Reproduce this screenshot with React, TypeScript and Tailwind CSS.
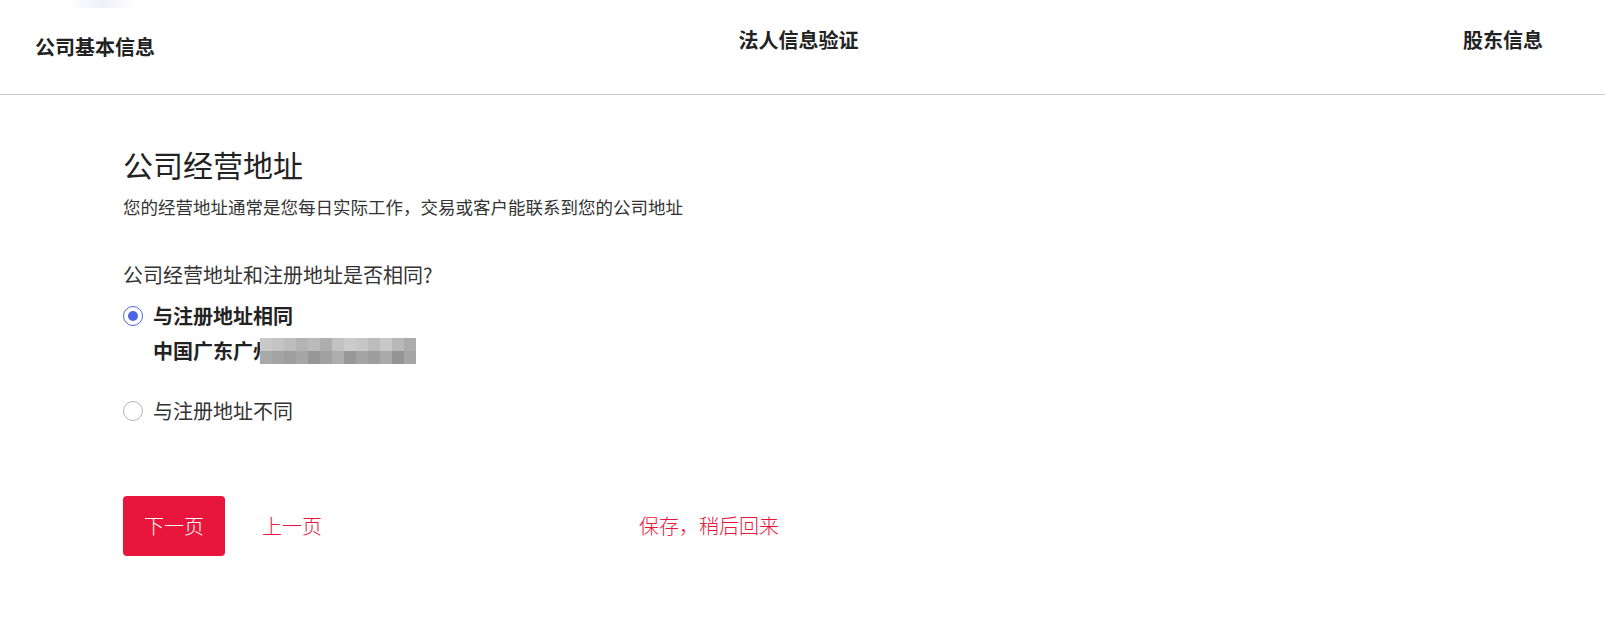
import { useState } from 'react';

const mosaicTop = ['#c9c9c9', '#c4c4c4', '#bdbdbd', '#b3b3b3', '#bababa', '#aeaeae', '#c2c2c2', '#cbcbcb', '#c6c6c6', '#bcbcbc', '#c8c8c8', '#b8b8b8', '#acacac'];
const mosaicBottom = ['#a9a9a9', '#a3a3a3', '#9f9f9f', '#a6a6a6', '#979797', '#a1a1a1', '#adadad', '#989898', '#a4a4a4', '#9d9d9d', '#aaaaaa', '#949494', '#a5a5a5'];

function Radio({ checked }: { checked: boolean }) {
  return (
    <span
      className={
        checked
          ? 'flex h-[20px] w-[20px] shrink-0 items-center justify-center rounded-full border border-[#4b66e6] bg-white'
          : 'flex h-[20px] w-[20px] shrink-0 items-center justify-center rounded-full border border-[#b4b4b4] bg-white'
      }
    >
      {checked && <span className="h-[10px] w-[10px] rounded-full bg-[#4b66e6]" />}
    </span>
  );
}

export default function App() {
  const [same, setSame] = useState(true);

  return (
    <div className="relative min-h-[619px] w-full bg-white font-['Noto_Sans_CJK_SC',sans-serif] text-[#222]">
      <div className="pointer-events-none absolute left-[68px] top-0 h-[8px] w-[68px] rounded-b-full bg-gradient-to-r from-transparent via-[#f0f0fa] to-transparent" />

      <header className="grid h-[95px] grid-cols-3 border-b border-[#cccccc]">
        <div className="pl-[35px] pt-[33px] text-[20px] font-bold leading-[28px]">公司基本信息</div>
        <div className="pr-[8px] pt-[26px] text-center text-[20px] font-bold leading-[28px]">法人信息验证</div>
        <div className="pr-[62px] pt-[26px] text-right text-[20px] font-bold leading-[28px]">股东信息</div>
      </header>

      <main className="pl-[123px] pt-[49px]">
        <h1 className="text-[30px] font-normal leading-[40px] text-[#222]">公司经营地址</h1>
        <p className="mt-[11px] text-[17.5px] leading-[24px] text-[#333]">
          您的经营地址通常是您每日实际工作，交易或客户能联系到您的公司地址
        </p>

        <p className="mt-[42px] text-[20px] leading-[28px] text-[#333]">公司经营地址和注册地址是否相同?</p>

        <button
          type="button"
          onClick={() => setSame(true)}
          className="mt-[13px] flex items-center gap-[10px] text-left"
        >
          <Radio checked={same} />
          <span className="text-[20px] font-bold leading-[28px] text-[#222]">与注册地址相同</span>
        </button>
        <div className="relative mt-[7px] ml-[30px] w-fit text-[20px] font-bold leading-[28px] text-[#222]">
          中国广东广州
          <span className="absolute left-[107px] top-[1px] flex h-[26px] flex-col">
            <span className="flex h-[13px]">
              {mosaicTop.map((c, i) => (
                <span key={i} className="h-full w-[12px]" style={{ backgroundColor: c }} />
              ))}
            </span>
            <span className="flex h-[13px]">
              {mosaicBottom.map((c, i) => (
                <span key={i} className="h-full w-[12px]" style={{ backgroundColor: c }} />
              ))}
            </span>
          </span>
        </div>

        <button
          type="button"
          onClick={() => setSame(false)}
          className="mt-[32px] flex items-center gap-[10px] text-left"
        >
          <Radio checked={!same} />
          <span className="text-[20px] font-normal leading-[28px] text-[#333]">与注册地址不同</span>
        </button>

        <div className="mt-[71px] flex items-center">
          <button
            type="button"
            className="h-[60px] w-[102px] rounded-[4px] bg-[#e8163c] text-[20px] font-light text-white"
          >
            下一页
          </button>
          <button type="button" className="ml-[37px] text-[20px] font-light text-[#e8163c]">
            上一页
          </button>
          <button type="button" className="ml-[317px] text-[20px] font-light text-[#e8163c]">
            保存，稍后回来
          </button>
        </div>
      </main>
    </div>
  );
}
